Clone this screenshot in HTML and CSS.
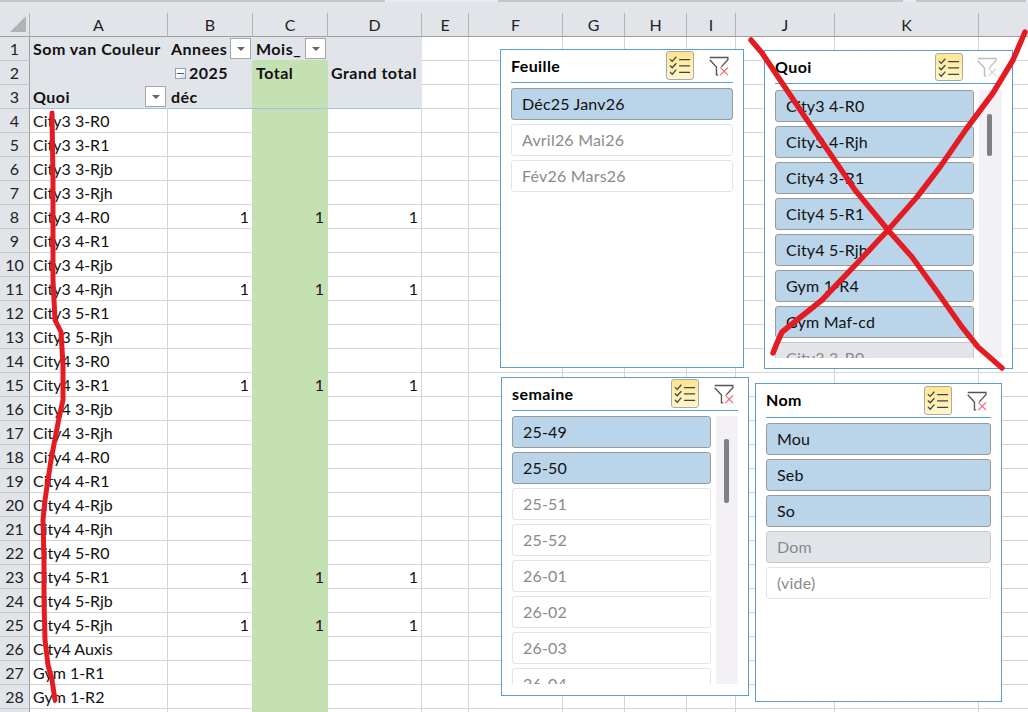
FILE: index.html
```html
<!DOCTYPE html>
<html lang="fr">
<head>
<meta charset="utf-8">
<title>Segments</title>
<link rel="stylesheet" href="styles.css">
</head>
<body>
<div class="tabs"><span class="t1"></span><span class="t2"></span><span class="t3"></span></div>
<div class="band"></div>
<div class="sheet-wrap">
<table class="sheet">
<colgroup><col class="c0"><col class="ca"><col class="cb"><col class="cc"><col class="cd"><col class="ce"><col class="cf"><col class="cg"><col class="ch"><col class="ci"><col class="cj"><col class="ck"><col class="cl"></colgroup>
<thead>
<tr class="colhead"><th class="corner"><span class="tri"></span></th><th>A</th><th>B</th><th>C</th><th>D</th><th>E</th><th>F</th><th>G</th><th>H</th><th>I</th><th>J</th><th>K</th><th class="last"></th></tr>
</thead>
<tbody>
<tr><th>1</th><td class="pv b nl">Som van Couleur</td><td class="pv b nl"><div class="hc">Annees<span class="dd"></span></div></td><td class="pv b mois"><div class="hc">Mois_<span class="dd"></span></div></td><td class="pv nl"></td><td></td><td></td><td></td><td></td><td></td><td></td><td></td><td></td></tr>
<tr><th>2</th><td class="pv nl"></td><td class="pv b nl"><div class="yr"><span class="minus"></span>2025</div></td><td class="gr b">Total</td><td class="pv b nl">Grand total</td><td></td><td></td><td></td><td></td><td></td><td></td><td></td><td></td></tr>
<tr class="hb"><th>3</th><td class="pv b"><div class="hc">Quoi<span class="dd"></span></div></td><td class="pv b">déc</td><td class="gr"></td><td class="pv"></td><td></td><td></td><td></td><td></td><td></td><td></td><td></td><td></td></tr>
<tr><th>4</th><td>City3 3-R0</td><td></td><td class="gr"></td><td></td><td></td><td></td><td></td><td></td><td></td><td></td><td></td><td></td></tr>
<tr><th>5</th><td>City3 3-R1</td><td></td><td class="gr"></td><td></td><td></td><td></td><td></td><td></td><td></td><td></td><td></td><td></td></tr>
<tr><th>6</th><td>City3 3-Rjb</td><td></td><td class="gr"></td><td></td><td></td><td></td><td></td><td></td><td></td><td></td><td></td><td></td></tr>
<tr><th>7</th><td>City3 3-Rjh</td><td></td><td class="gr"></td><td></td><td></td><td></td><td></td><td></td><td></td><td></td><td></td><td></td></tr>
<tr><th>8</th><td>City3 4-R0</td><td class="n">1</td><td class="gr n">1</td><td class="n">1</td><td></td><td></td><td></td><td></td><td></td><td></td><td></td><td></td></tr>
<tr><th>9</th><td>City3 4-R1</td><td></td><td class="gr"></td><td></td><td></td><td></td><td></td><td></td><td></td><td></td><td></td><td></td></tr>
<tr><th>10</th><td>City3 4-Rjb</td><td></td><td class="gr"></td><td></td><td></td><td></td><td></td><td></td><td></td><td></td><td></td><td></td></tr>
<tr><th>11</th><td>City3 4-Rjh</td><td class="n">1</td><td class="gr n">1</td><td class="n">1</td><td></td><td></td><td></td><td></td><td></td><td></td><td></td><td></td></tr>
<tr><th>12</th><td>City3 5-R1</td><td></td><td class="gr"></td><td></td><td></td><td></td><td></td><td></td><td></td><td></td><td></td><td></td></tr>
<tr><th>13</th><td>City3 5-Rjh</td><td></td><td class="gr"></td><td></td><td></td><td></td><td></td><td></td><td></td><td></td><td></td><td></td></tr>
<tr><th>14</th><td>City4 3-R0</td><td></td><td class="gr"></td><td></td><td></td><td></td><td></td><td></td><td></td><td></td><td></td><td></td></tr>
<tr><th>15</th><td>City4 3-R1</td><td class="n">1</td><td class="gr n">1</td><td class="n">1</td><td></td><td></td><td></td><td></td><td></td><td></td><td></td><td></td></tr>
<tr><th>16</th><td>City4 3-Rjb</td><td></td><td class="gr"></td><td></td><td></td><td></td><td></td><td></td><td></td><td></td><td></td><td></td></tr>
<tr><th>17</th><td>City4 3-Rjh</td><td></td><td class="gr"></td><td></td><td></td><td></td><td></td><td></td><td></td><td></td><td></td><td></td></tr>
<tr><th>18</th><td>City4 4-R0</td><td></td><td class="gr"></td><td></td><td></td><td></td><td></td><td></td><td></td><td></td><td></td><td></td></tr>
<tr><th>19</th><td>City4 4-R1</td><td></td><td class="gr"></td><td></td><td></td><td></td><td></td><td></td><td></td><td></td><td></td><td></td></tr>
<tr><th>20</th><td>City4 4-Rjb</td><td></td><td class="gr"></td><td></td><td></td><td></td><td></td><td></td><td></td><td></td><td></td><td></td></tr>
<tr><th>21</th><td>City4 4-Rjh</td><td></td><td class="gr"></td><td></td><td></td><td></td><td></td><td></td><td></td><td></td><td></td><td></td></tr>
<tr><th>22</th><td>City4 5-R0</td><td></td><td class="gr"></td><td></td><td></td><td></td><td></td><td></td><td></td><td></td><td></td><td></td></tr>
<tr><th>23</th><td>City4 5-R1</td><td class="n">1</td><td class="gr n">1</td><td class="n">1</td><td></td><td></td><td></td><td></td><td></td><td></td><td></td><td></td></tr>
<tr><th>24</th><td>City4 5-Rjb</td><td></td><td class="gr"></td><td></td><td></td><td></td><td></td><td></td><td></td><td></td><td></td><td></td></tr>
<tr><th>25</th><td>City4 5-Rjh</td><td class="n">1</td><td class="gr n">1</td><td class="n">1</td><td></td><td></td><td></td><td></td><td></td><td></td><td></td><td></td></tr>
<tr><th>26</th><td>City4 Auxis</td><td></td><td class="gr"></td><td></td><td></td><td></td><td></td><td></td><td></td><td></td><td></td><td></td></tr>
<tr><th>27</th><td>Gym 1-R1</td><td></td><td class="gr"></td><td></td><td></td><td></td><td></td><td></td><td></td><td></td><td></td><td></td></tr>
<tr><th>28</th><td>Gym 1-R2</td><td></td><td class="gr"></td><td></td><td></td><td></td><td></td><td></td><td></td><td></td><td></td><td></td></tr>
<tr><th></th><td></td><td></td><td class="gr"></td><td></td><td></td><td></td><td></td><td></td><td></td><td></td><td></td><td></td></tr>
</tbody>
</table>
</div>

<section class="slicer s-feuille">
  <header class="sl-head"><h2>Feuille</h2>
    <span class="multi"><svg viewBox="0 0 24 22" class="multi-i"><path d="M1 4l2.5 2.5L8 1.5M1 11l2.5 2.5L8 8.5M1 18l2.5 2.5L8 15.5" /><path d="M11 4.5h12M11 11.5h12M11 18.5h12" /></svg></span>
    <svg viewBox="0 0 22 21" class="clear"><path class="f" d="M.8 1.2h20v2.4L13.5 11.5M.8 3.6l7.4 8v8.6h2"/><path class="x" d="M12.5 12l8.5 8.5M21 12l-8.5 8.5"/></svg>
  </header>
  <div class="items">
    <div class="it on">Déc25 Janv26</div>
    <div class="it">Avril26 Mai26</div>
    <div class="it">Fév26 Mars26</div>
  </div>
</section>

<section class="slicer s-quoi">
  <header class="sl-head"><h2>Quoi</h2>
    <span class="multi"><svg viewBox="0 0 24 22" class="multi-i"><path d="M1 4l2.5 2.5L8 1.5M1 11l2.5 2.5L8 8.5M1 18l2.5 2.5L8 15.5" /><path d="M11 4.5h12M11 11.5h12M11 18.5h12" /></svg></span>
    <svg viewBox="0 0 22 21" class="clear off"><path class="f" d="M.8 1.2h20v2.4L13.5 11.5M.8 3.6l7.4 8v8.6h2"/><path class="x" d="M12.5 12l8.5 8.5M21 12l-8.5 8.5"/></svg>
  </header>
  <div class="body">
    <div class="items">
      <div class="it on">City3 4-R0</div>
      <div class="it on">City3 4-Rjh</div>
      <div class="it on">City4 3-R1</div>
      <div class="it on">City4 5-R1</div>
      <div class="it on">City4 5-Rjh</div>
      <div class="it on">Gym 1-R4</div>
      <div class="it on">Gym Maf-cd</div>
      <div class="it nodata">City3 3-R0</div>
    </div>
    <div class="track"><span class="thumb"></span></div>
  </div>
</section>

<section class="slicer s-semaine">
  <header class="sl-head"><h2>semaine</h2>
    <span class="multi"><svg viewBox="0 0 24 22" class="multi-i"><path d="M1 4l2.5 2.5L8 1.5M1 11l2.5 2.5L8 8.5M1 18l2.5 2.5L8 15.5" /><path d="M11 4.5h12M11 11.5h12M11 18.5h12" /></svg></span>
    <svg viewBox="0 0 22 21" class="clear"><path class="f" d="M.8 1.2h20v2.4L13.5 11.5M.8 3.6l7.4 8v8.6h2"/><path class="x" d="M12.5 12l8.5 8.5M21 12l-8.5 8.5"/></svg>
  </header>
  <div class="body">
    <div class="items">
      <div class="it on">25-49</div>
      <div class="it on">25-50</div>
      <div class="it">25-51</div>
      <div class="it">25-52</div>
      <div class="it">26-01</div>
      <div class="it">26-02</div>
      <div class="it">26-03</div>
      <div class="it">26-04</div>
    </div>
    <div class="track"><span class="thumb"></span></div>
  </div>
</section>

<section class="slicer s-nom">
  <header class="sl-head"><h2>Nom</h2>
    <span class="multi"><svg viewBox="0 0 24 22" class="multi-i"><path d="M1 4l2.5 2.5L8 1.5M1 11l2.5 2.5L8 8.5M1 18l2.5 2.5L8 15.5" /><path d="M11 4.5h12M11 11.5h12M11 18.5h12" /></svg></span>
    <svg viewBox="0 0 22 21" class="clear"><path class="f" d="M.8 1.2h20v2.4L13.5 11.5M.8 3.6l7.4 8v8.6h2"/><path class="x" d="M12.5 12l8.5 8.5M21 12l-8.5 8.5"/></svg>
  </header>
  <div class="items">
    <div class="it on">Mou</div>
    <div class="it on">Seb</div>
    <div class="it on">So</div>
    <div class="it nodata">Dom</div>
    <div class="it">(vide)</div>
  </div>
</section>

<svg class="ink" viewBox="0 0 1028 712" width="1028" height="712">
  <path class="thin" d="M52 113L53 180 53 240 53 280 55 320 61 332 63 365 63 400 59 418 51 460 45 500 43 520 44 560 44 600 45 640 48 665 52 680 55 700"/>
  <path d="M751 40L762 53 807 120 855 190 888 230 912 257 938 293 962 327 978 347 1002 368"/>
  <path d="M1025 32L1013 60 993 93 967 128 940 167 917 197 888 230 862 258 822 300 782 332 777 343 773 353"/>
</svg>
</body>
</html>
```
FILE: styles.css
```css
* { box-sizing: border-box; }
html, body { margin: 0; padding: 0; height: 712px; overflow: hidden; background: #fff; }
body { position: relative; font-family: "Lato", "Open Sans", sans-serif; font-size: 16px; color: #111; }

.tabs { display: flex; height: 2px; background: #e8ebef; }
.tabs span { display: block; height: 2px; background: #c6c6c6; }
.tabs .t1 { width: 385px; }
.tabs .t2 { width: 405px; margin-left: 113px; }
.tabs .t3 { width: 110px; margin-left: 13px; }
.band { height: 11px; background: #e1e5ea; }

.sheet-wrap { height: 699px; overflow: hidden; }
.sheet { border-collapse: separate; border-spacing: 0; table-layout: fixed; width: 1029px; }
.c0 { width: 30px; } .ca { width: 138px; } .cb { width: 85px; } .cc { width: 75px; } .cd { width: 94px; }
.ce { width: 47px; } .cf { width: 94px; } .cg { width: 62px; } .ch { width: 62px; } .ci { width: 49px; }
.cj { width: 99px; } .ck { width: 144px; } .cl { width: 50px; }

.sheet tr { height: 24px; }
.colhead th { background: #e1e5ea; font-weight: 400; font-size: 16px; color: #222; border-right: 1px solid #b4b4b4; border-bottom: 1px solid #9f9f9f; padding: 0; height: 24px; }
.colhead .last { border-right: 0; }
.corner { position: relative; }
.tri { position: absolute; left: 10px; top: 3px; width: 0; height: 0; border-style: solid; border-width: 0 0 16px 16px; border-color: transparent transparent #b2b2b2 transparent; }

tbody th { background: #e1e5ea; font-weight: 400; font-size: 16px; line-height: 22px; color: #222; border-right: 1px solid #9f9f9f; border-bottom: 1px solid #c9c9c9; padding: 0; text-align: center; }
td { padding: 1px 0 0 3px; border-right: 1px solid #d4d4d4; border-bottom: 1px solid #d4d4d4; white-space: nowrap; overflow: hidden; height: 24px; background: #fff; line-height: 22px; }
td.b { font-weight: 700; color: #111; letter-spacing: .5px; }
td.n { text-align: right; padding-right: 3px; }
td.pv { background: #e1e5ea; border-color: #e1e5ea; }
td.gr { background: #c5e0b3; border-color: #c5e0b3; box-shadow: -1px 0 0 #c5e0b3; }
td.mois { border-bottom-color: #c5e0b3; }
.hb td.pv, .hb td.gr { border-bottom-color: #9dc3e6; }
.hc { display: flex; justify-content: space-between; align-items: flex-start; height: 22px; padding-right: 1px; }
.dd { width: 21px; height: 21px; border: 1px solid #a6a6a6; background: #fff; position: relative; flex: none; }
.dd::after { content: ""; position: absolute; left: 6px; top: 8px; border-style: solid; border-width: 4px 4px 0; border-color: #666 transparent transparent; }
.yr { display: flex; align-items: center; padding-left: 4px; gap: 3px; }
.minus { width: 11px; height: 11px; border: 1px solid #8ea0bd; background: linear-gradient(135deg, #fff 50%, #c8d2e0); position: relative; }
.minus::after { content: ""; position: absolute; left: 1px; right: 1px; top: 4px; height: 1px; background: #4a5a78; }

.slicer { position: absolute; background: #fff; border: 1px solid #5b9bd5; padding: 0 10px; display: flex; flex-direction: column; overflow: hidden; }
.s-feuille { left: 500px; top: 49px; width: 244px; height: 319px; }
.s-quoi { left: 764px; top: 50px; width: 249px; height: 319px; }
.s-semaine { left: 501px; top: 377px; width: 248px; height: 319px; }
.s-nom { left: 755px; top: 383px; width: 247px; height: 319px; }

.sl-head { height: 33px; flex: none; display: flex; align-items: flex-start; border-bottom: 1px solid #5b9bd5; }
.s-nom .sl-head { height: 34px; }
.sl-head h2 { margin: 0; font-size: 16px; line-height: 32px; font-weight: 700; letter-spacing: .4px; color: #000; flex: 1; }
.multi { width: 28px; height: 29px; flex: none; border: 1px solid #a9a9a9; border-radius: 3px; background: linear-gradient(#fee58f, #fff7cf); display: flex; align-items: center; justify-content: center; margin: 1px 15px 0 0; }
.s-quoi .multi { margin: 2px 14px 0 0; height: 28px; }
.s-nom .multi { margin-top: 2px; }
.multi-i { width: 22px; height: 21px; fill: none; stroke: #444; stroke-width: 1.4; }
.clear { width: 20px; height: 20px; margin: 6px 4px 0 0; fill: none; flex: none; }
.s-quoi .clear { margin-right: 5px; }
.s-nom .clear { margin-top: 7px; }
.clear .f { stroke: #555; stroke-width: 1.5; }
.clear .x { stroke: #f2626a; stroke-width: 1.2; }
.clear.off .f { stroke: #bdbdbd; }
.clear.off .x { stroke: #d0d0d0; }

.items { display: flex; flex-direction: column; gap: 4px; padding-top: 5px; flex: 1; min-width: 0; overflow: hidden; height: 275px; }
.it { flex: none; height: 32px; border: 1px solid #e1e5ea; border-radius: 3px; padding-left: 10px; font-size: 16px; letter-spacing: .2px; line-height: 30px; color: #8a8a8a; background: #fff; }
.it.on { background: #bad4ea; border-color: #9a9a9a; color: #111; }
.it.nodata { background: #e1e5ea; border-color: #c8c8c8; color: #8a8a8a; }

.body { display: flex; gap: 5px; height: 274px; flex: none; }
.body .items { padding-top: 0; margin-top: 5px; height: 268px; flex: 1; }
.s-quoi .body .items, .s-quoi .track { margin-top: 6px; }
.track { width: 22px; flex: none; background: #f3f1f5; margin-top: 5px; height: 268px; position: relative; }
.s-quoi .track { width: 23px; }
.thumb { position: absolute; left: 8px; top: 24px; width: 5px; height: 42px; background: #808080; border-radius: 2px; }
.s-semaine .thumb { top: 23px; height: 64px; }

.ink { position: absolute; left: 0; top: 0; pointer-events: none; fill: none; stroke: #e31b23; stroke-width: 5.5; stroke-linecap: round; stroke-linejoin: round; }
.ink .thin { stroke-width: 5; }
```
